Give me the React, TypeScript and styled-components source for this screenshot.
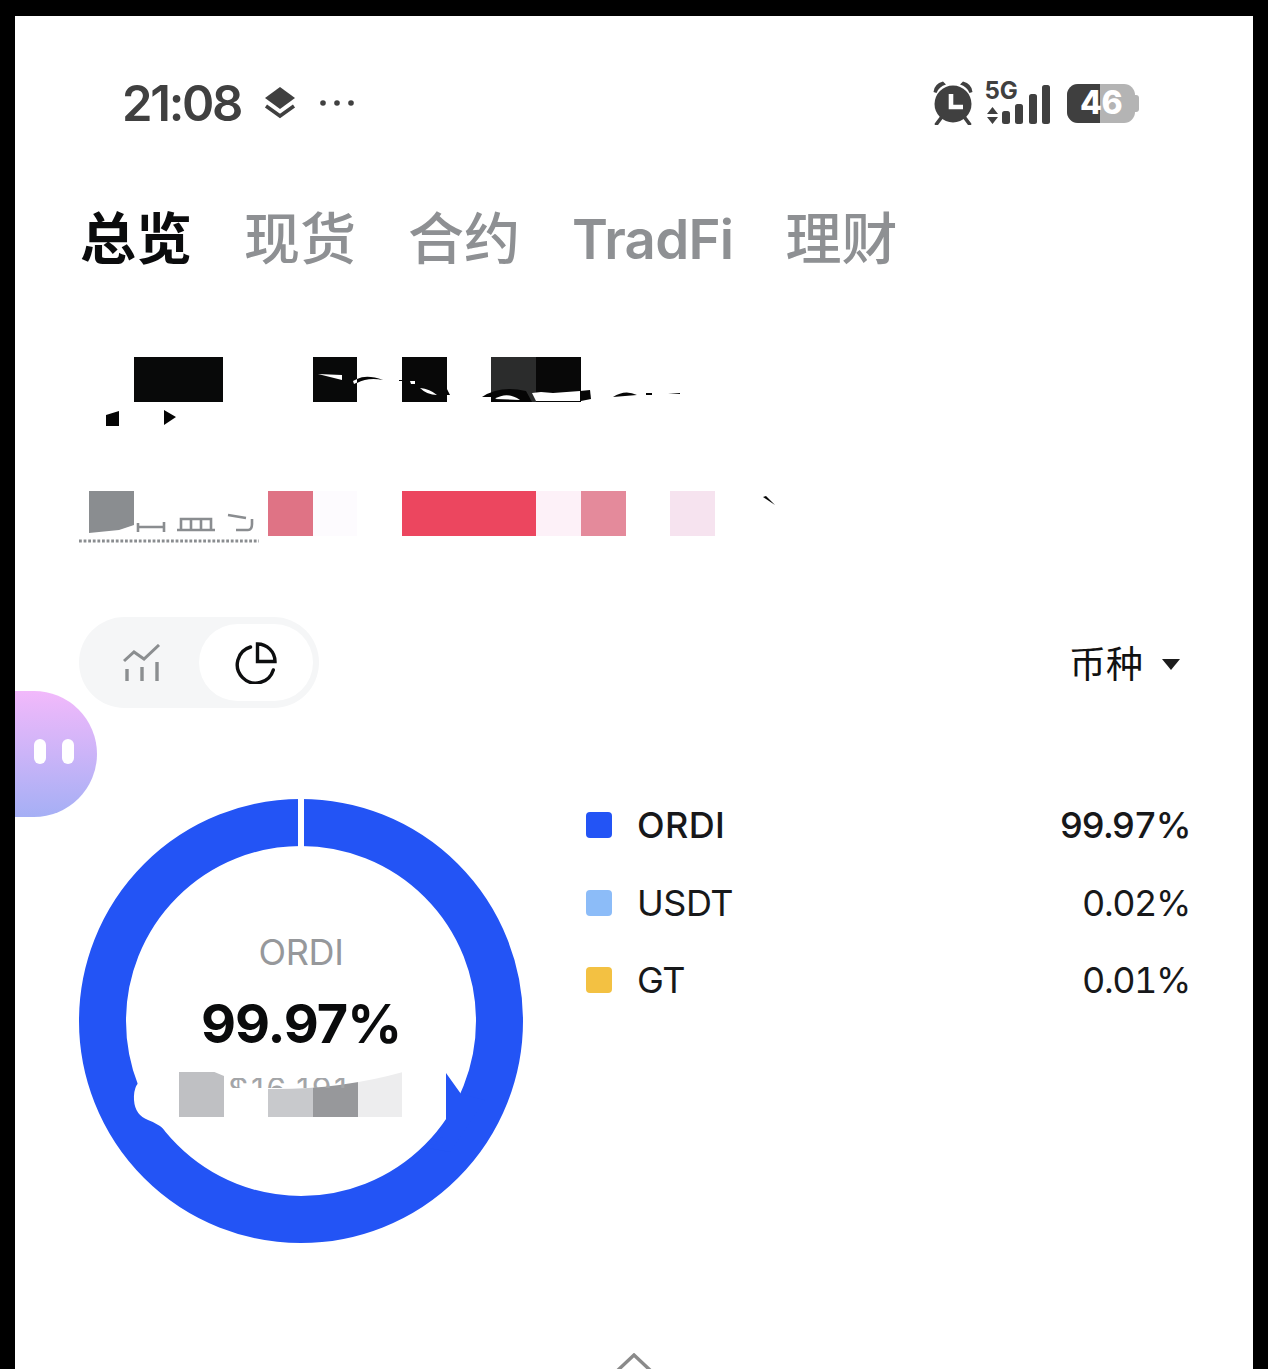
import React from "react";
import styled, { createGlobalStyle } from "styled-components";

const FONT = `Inter, "Noto Sans CJK SC", "Noto Sans", sans-serif`;
const CELL = 44.7;

const Global = createGlobalStyle`
  html, body { margin: 0; padding: 0; background: #000; }
  body { font-family: ${FONT}; }
`;

const Frame = styled.div`
  width: 1268px;
  height: 1369px;
  box-sizing: border-box;
  padding: 16px 15px 0;
  background: #000;
  overflow: hidden;
`;

const Screen = styled.main`
  position: relative;
  height: 1353px;
  background: #fff;
  overflow: hidden;
  display: flex;
  flex-direction: column;
`;

const StatusBar = styled.header`
  height: 174px;
  flex: none;
  padding: 0 113px 0 107px;
  display: flex;
  align-items: center;
  justify-content: space-between;
  color: #404040;
`;

const StatusGroup = styled.div<{ $gap: number }>`
  display: flex;
  align-items: center;
  gap: ${(p) => p.$gap}px;
`;

const Clock = styled.span`
  font-size: 49px;
  font-weight: 600;
  letter-spacing: -2.3px;
  line-height: 1;
`;

const Battery = styled.div`
  position: relative;
  width: 68px;
  height: 39px;
  margin: 0 5px 0 4px;
  border-radius: 11px;
  background: #b4b4b4;
  display: flex;
  align-items: center;
  justify-content: center;
  &::after {
    content: "";
    position: absolute;
    right: -4px;
    top: 11px;
    width: 4px;
    height: 17px;
    border-radius: 0 3px 3px 0;
    background: #b4b4b4;
  }
`;

const BatteryCharge = styled.div`
  position: absolute;
  left: 0;
  top: 0;
  bottom: 0;
  width: 33px;
  border-radius: 11px 0 0 11px;
  background: #3f3f3f;
`;

const BatteryLabel = styled.span`
  position: relative;
  font-size: 32px;
  font-weight: 800;
  color: #fff;
  line-height: 1;
  letter-spacing: -0.5px;
`;

const Tabs = styled.nav`
  height: 96px;
  flex: none;
  padding: 2px 0 0 65px;
  box-sizing: border-box;
  display: flex;
  align-items: center;
  gap: 52px;
`;

const Tab = styled.span<{ $active?: boolean }>`
  font-size: 56px;
  font-weight: ${(p) => (p.$active ? 700 : 500)};
  line-height: 1;
  color: ${(p) => (p.$active ? "#0b0c0d" : "#8e9093")};
`;

const LatinTab = styled(Tab)`
  font-size: 54.5px;
  font-weight: 600;
  letter-spacing: -0.7px;
`;

const Mosaic = styled.div<{ $top: number; $left: number }>`
  flex: none;
  margin: ${(p) => p.$top}px 0 0 ${(p) => p.$left}px;
  display: grid;
  grid-template-columns: repeat(14, ${CELL}px);
  grid-auto-rows: 45px;
`;

const Tile = styled.i<{ $col: number; $span?: number; $color: string }>`
  display: block;
  grid-column: ${(p) => p.$col} / span ${(p) => p.$span ?? 1};
  grid-row: 1;
  background: ${(p) => p.$color};
`;

const Remnants = styled.svg`
  position: absolute;
  left: 0;
  top: 0;
  width: 1238px;
  height: 600px;
`;

const Toolbar = styled.section`
  flex: none;
  margin: 81px 65px 0 64px;
  height: 91px;
  display: flex;
  align-items: center;
  justify-content: space-between;
`;

const Toggle = styled.div`
  width: 240px;
  height: 91px;
  box-sizing: border-box;
  padding: 7px 6px 7px 0;
  border-radius: 46px;
  background: #f5f6f7;
  display: flex;
  align-items: center;
`;

const ToggleOption = styled.div<{ $active?: boolean }>`
  flex: ${(p) => (p.$active ? "0 0 114px" : "1")};
  height: 100%;
  border-radius: 40px;
  background: ${(p) => (p.$active ? "#fff" : "transparent")};
  display: flex;
  align-items: center;
  justify-content: center;
`;

const Filter = styled.div`
  display: flex;
  align-items: center;
  gap: 19px;
  padding: 4px 8px 0 0;
  font-size: 37px;
  line-height: 1;
  color: #111;
`;

const Caret = styled.i`
  display: block;
  width: 0;
  height: 0;
  border-left: 9px solid transparent;
  border-right: 9px solid transparent;
  border-top: 11px solid #1c1c1c;
`;

const Bubble = styled.div`
  position: absolute;
  left: 0;
  top: 675px;
  width: 82px;
  height: 126px;
  border-radius: 0 63px 63px 0 / 0 63px 63px 0;
  background: linear-gradient(180deg, #f2b9fb 0%, #a5aff5 100%);
  display: flex;
  align-items: center;
  justify-content: center;
  gap: 16px;
  padding: 0 4px 6px 0;
  box-sizing: border-box;
`;

const BubbleEye = styled.i`
  display: block;
  width: 12px;
  height: 25px;
  border-radius: 6px;
  background: #fff;
`;

const ChartRow = styled.section`
  flex: none;
  margin: 91px 63px 0 64px;
  display: flex;
  align-items: flex-start;
  gap: 63px;
`;

const Donut = styled.div`
  position: relative;
  flex: none;
  width: 444px;
  height: 444px;
`;

const DonutRing = styled.svg`
  display: block;
  width: 444px;
  height: 444px;
`;

const DonutCenter = styled.div`
  position: absolute;
  inset: 131px 0 0;
  display: flex;
  flex-direction: column;
  align-items: center;
`;

const CenterSymbol = styled.div`
  font-size: 36px;
  line-height: 44px;
  color: #96989b;
  letter-spacing: -0.3px;
`;

const CenterValue = styled.div`
  margin-top: 15px;
  font-size: 54px;
  line-height: 70px;
  font-weight: 700;
  letter-spacing: -1px;
  color: #0a0b0c;
`;

const HiddenAmount = styled.div`
  position: relative;
  align-self: flex-start;
  margin: 13px 0 0 100px;
  width: 223.5px;
  height: 45px;
  display: grid;
  grid-template-columns: repeat(5, ${CELL}px);
`;

const AmountMask = styled.svg`
  position: absolute;
  left: 0;
  top: 0;
  width: 224px;
  height: 45px;
`;

const AmountPeek = styled.div`
  position: absolute;
  left: 49px;
  top: 6px;
  width: 128px;
  height: 10px;
  overflow: hidden;
  font-size: 32px;
  line-height: 24px;
  letter-spacing: 2.4px;
  color: #a3a5a8;
  white-space: nowrap;
`;

const Legend = styled.ul`
  flex: 1;
  margin: 0;
  padding: 0;
  list-style: none;
  display: flex;
  flex-direction: column;
  gap: 25.5px;
`;

const LegendRow = styled.li`
  height: 52px;
  display: flex;
  align-items: center;
  font-size: 36px;
  font-variant-numeric: tabular-nums;
  color: #17181a;
`;

const Swatch = styled.i<{ $color: string }>`
  flex: none;
  width: 26px;
  height: 26px;
  margin-right: 25px;
  border-radius: 4px;
  background: ${(p) => p.$color};
`;

const LegendName = styled.span<{ $strong?: boolean }>`
  flex: 1;
  font-weight: ${(p) => (p.$strong ? 500 : 400)};
  letter-spacing: ${(p) => (p.$strong ? "0.4px" : "-0.5px")};
`;

const LegendValue = styled.span<{ $strong?: boolean }>`
  font-weight: ${(p) => (p.$strong ? 500 : 400)};
  letter-spacing: -1.4px;
`;

const Expand = styled.div`
  flex: none;
  margin-top: 110px;
  display: flex;
  justify-content: center;
`;

const Layers = () => (
  <svg width="32" height="34" viewBox="0 0 32 34">
    <path d="M16 1 L31 12 L16 23 L1 12 Z" fill="#404040" />
    <path d="M2 20 L16 30 L30 20" fill="none" stroke="#404040" strokeWidth="3.6" />
  </svg>
);

const Dots = () => (
  <svg width="36" height="8" viewBox="0 0 36 8">
    <circle cx="4" cy="4" r="2.8" fill="#404040" />
    <circle cx="18" cy="4" r="2.8" fill="#404040" />
    <circle cx="32" cy="4" r="2.8" fill="#404040" />
  </svg>
);

const Alarm = () => (
  <svg width="40" height="44" viewBox="0 0 40 44">
    <circle cx="20" cy="23" r="18.5" fill="#404040" />
    <path d="M0.5 11 Q1 3 10 0.5 L13 3.5 Q6 5.5 3.5 12 Z" fill="#404040" />
    <path d="M39.5 11 Q39 3 30 0.5 L27 3.5 Q34 5.5 36.5 12 Z" fill="#404040" />
    <path d="M8 37 L3.5 43 M32 37 L36.5 43" stroke="#404040" strokeWidth="3.6" strokeLinecap="round" />
    <path d="M18 13 V26 H30" fill="none" stroke="#fff" strokeWidth="4.6" />
  </svg>
);

const Signal = () => (
  <svg width="66" height="46" viewBox="985 78 66 46" style={{ overflow: "visible" }}>
    <text x="984.5" y="97" fontFamily={FONT} fontSize="24" fontWeight="700" fill="#404040">5G</text>
    <path d="M992.5 105 L998 112 H987 Z M992.5 122 L998 115 H987 Z" fill="#404040" />
    <rect x="1002" y="109" width="8" height="13" rx="2.5" fill="#404040" />
    <rect x="1015" y="102" width="8" height="20" rx="2.5" fill="#404040" />
    <rect x="1029" y="92" width="8" height="30" rx="2.5" fill="#404040" />
    <rect x="1042" y="83" width="8" height="39" rx="2.5" fill="#404040" />
  </svg>
);

const TrendBars = () => (
  <svg width="38" height="38" viewBox="0 0 38 38" style={{ marginLeft: 6 }}>
    <path d="M1 17 L11 8 L21 15 L36 1" fill="none" stroke="#8b8e90" strokeWidth="3" />
    <path d="M4 25 V37 M19 23 V37 M34 18 V37" fill="none" stroke="#8b8e90" strokeWidth="3.4" />
  </svg>
);

const PieOutline = () => (
  <svg width="42" height="42" viewBox="0 0 42 42">
    <path
      d="M15.5 5 A18.4 18.4 0 1 0 38.3 28"
      fill="none"
      stroke="#0d0e0f"
      strokeWidth="3.4"
      strokeLinecap="round"
    />
    <path d="M22.5 2 A17.5 17.5 0 0 1 40 19.5 H22.5 Z" fill="none" stroke="#0d0e0f" strokeWidth="3.4" />
  </svg>
);

const Chevron = () => (
  <svg width="38" height="20" viewBox="0 0 38 20">
    <path d="M2 18 L19 2 L36 18" fill="none" stroke="#8a8a8a" strokeWidth="3.4" />
  </svg>
);

const legend = [
  { name: "ORDI", value: "99.97%", color: "#2354f5", strong: true },
  { name: "USDT", value: "0.02%", color: "#8cbcf8" },
  { name: "GT", value: "0.01%", color: "#f3c142" },
];

export default function App() {
  return (
    <>
      <Global />
      <Frame>
        <Screen>
          <StatusBar>
            <StatusGroup $gap={23}>
              <Clock>21:08</Clock>
              <Layers />
              <Dots />
            </StatusGroup>
            <StatusGroup $gap={12}>
              <Alarm />
              <Signal />
              <Battery>
                <BatteryCharge />
                <BatteryLabel>46</BatteryLabel>
              </Battery>
            </StatusGroup>
          </StatusBar>

          <Tabs>
            <Tab $active>总览</Tab>
            <Tab>现货</Tab>
            <Tab>合约</Tab>
            <LatinTab>TradFi</LatinTab>
            <Tab>理财</Tab>
          </Tabs>

          <Mosaic $top={71} $left={74.3}>
            <Tile $col={2} $span={2} $color="#080909" />
            <Tile $col={6} $color="#080909" />
            <Tile $col={8} $color="#080808" />
            <Tile $col={10} $color="#2b2c2c" />
            <Tile $col={11} $color="#080808" />
          </Mosaic>

          <Mosaic $top={89} $left={74.3}>
            <Tile $col={1} $color="#8a8d90" />
            <Tile $col={5} $color="#df7385" />
            <Tile $col={6} $color="#fdfbfe" />
            <Tile $col={8} $span={3} $color="#ec465f" />
            <Tile $col={11} $color="#fdf1f8" />
            <Tile $col={12} $color="#e48a9b" />
            <Tile $col={14} $color="#f6e3ef" />
          </Mosaic>

          <Remnants viewBox="15 16 1238 600" aria-hidden>
            <path d="M106 415 L119 411 V426 H106 Z M164 410 L176 417 L164 425 Z" fill="#050505" />
            <path d="M318 374 L342 375 V380 Z" fill="#fff" />
            <path d="M353 381 Q366 373 383 380 Q368 376 354 384 Z" fill="#fff" />
            <path d="M357 379 Q367 374 383 380 Q368 377 357 383 Z" fill="#050505" />
            <path d="M410 381 H415 V384 H411 Z M420 388 Q430 389 437 395 Q427 395 420 388 Z" fill="#fff" />
            <path d="M399 380 H402 V381 H399 Z M445 385 L450 395 L447 395 Z" fill="#050505" />
            <path d="M482 397 Q500 385 526 391 L532 402 H491 V397 Z" fill="#050505" />
            <path d="M495 399 Q507 391 520 400 Z" fill="#fff" />
            <path d="M532 393 L541 392 L553 393 L580 391 V401 H536 Z" fill="#fff" />
            <path d="M580 391 L590 390 L591 399 L581 401 Z" fill="#050505" />
            <path d="M613 397 Q625 389 637 395 Z M646 393 H652 V395 H646 Z M668 394 L680 393 V394 Z" fill="#050505" />
            <path d="M763 497 L766 496 L775 505 Z" fill="#050505" />
            <path d="M89 533 L119 530 L134 525 V537 H89 Z" fill="#fff" />
            <path
              d="M138 532 V523 M138 527 H164 M164 532 V522 M177 530 H215 M181 530 V519 H211 V530 M191 519 V530 M201 519 V530 M228 515 L246 518 M236 530 H248 Q252 530 252 524 V519"
              fill="none"
              stroke="#8a8d90"
              strokeWidth="2.6"
            />
            <path d="M79 541 H259" stroke="#8a8d90" strokeWidth="3" strokeDasharray="2.8 1.8" />
          </Remnants>

          <Toolbar>
            <Toggle>
              <ToggleOption>
                <TrendBars />
              </ToggleOption>
              <ToggleOption $active>
                <PieOutline />
              </ToggleOption>
            </Toggle>
            <Filter>
              币种
              <Caret />
            </Filter>
          </Toolbar>

          <Bubble>
            <BubbleEye />
            <BubbleEye />
          </Bubble>

          <ChartRow>
            <Donut>
              <DonutRing viewBox="79 799 444 444" aria-hidden>
                <circle cx="301" cy="1021" r="198.5" fill="none" stroke="#2354f5" strokeWidth="47" />
                <rect x="298" y="796" width="6" height="52" fill="#fff" />
                <path d="M134 1100 Q133 1082 146 1078 H200 V1135 H170 Q160 1124 148 1120 Q135 1115 134 1100 Z" fill="#fff" />
                <path d="M446 1073 L461 1094 L485 1100 L450 1152 L428 1148 L446 1134 Z" fill="#2354f5" />
              </DonutRing>
              <DonutCenter>
                <CenterSymbol>ORDI</CenterSymbol>
                <CenterValue>99.97%</CenterValue>
                <HiddenAmount>
                  <Tile $col={1} $color="#bfc0c3" />
                  <Tile $col={3} $color="#c8c9cc" />
                  <Tile $col={4} $color="#97989b" />
                  <Tile $col={5} $color="#ededee" />
                  <AmountMask viewBox="0 0 224 45" aria-hidden>
                    <path d="M33 -1 L45 4 V-1 Z M89 -1 V17 Q160 18 224 0 V-1 Z" fill="#fff" />
                  </AmountMask>
                  <AmountPeek>$16,191</AmountPeek>
                </HiddenAmount>
              </DonutCenter>
            </Donut>

            <Legend>
              {legend.map((item) => (
                <LegendRow key={item.name}>
                  <Swatch $color={item.color} />
                  <LegendName $strong={item.strong}>{item.name}</LegendName>
                  <LegendValue $strong={item.strong}>{item.value}</LegendValue>
                </LegendRow>
              ))}
            </Legend>
          </ChartRow>

          <Expand>
            <Chevron />
          </Expand>
        </Screen>
      </Frame>
    </>
  );
}
